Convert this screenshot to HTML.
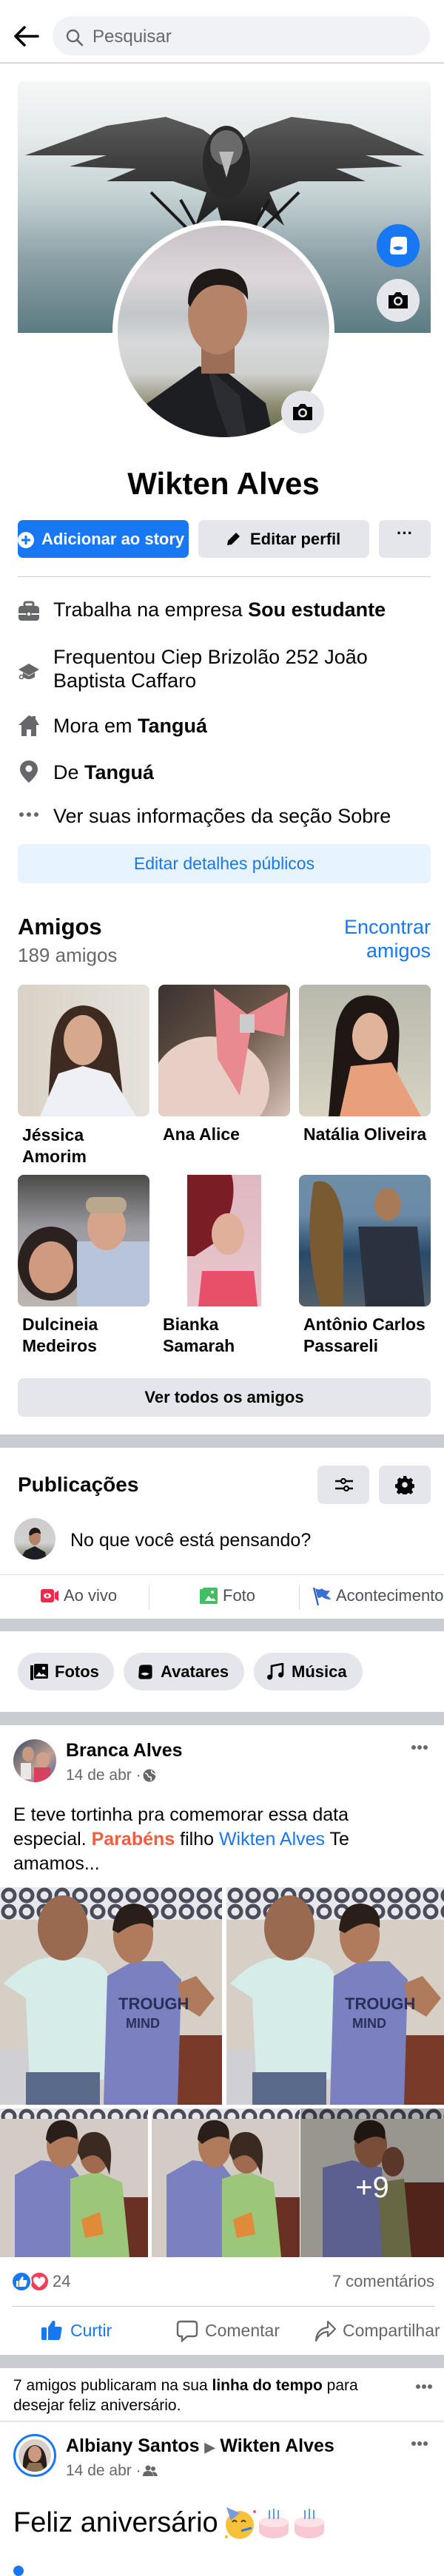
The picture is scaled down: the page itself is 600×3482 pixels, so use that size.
<!DOCTYPE html>
<html><head><meta charset="utf-8">
<style>
*{margin:0;padding:0;box-sizing:border-box}
body{width:600px;height:3472px;position:relative;background:#fff;font-family:"Liberation Sans",Arial,sans-serif;color:#050505;overflow:hidden}
.a{position:absolute}
.t{position:absolute;white-space:nowrap;line-height:1.15}
.b{font-weight:bold}
.sep{position:absolute;left:0;width:600px;background:#c9ccd1}
.gbtn{position:absolute;background:#e4e6eb;border-radius:8px}
.ph{position:absolute;overflow:hidden}
.grey{color:#65676b}
</style></head><body>

<!-- header -->
<svg class="a" style="left:18px;top:34px" width="36" height="30" viewBox="0 0 36 30"><path d="M33 15H4M15 3L3 15l12 12" stroke="#050505" stroke-width="3.6" fill="none" stroke-linecap="round" stroke-linejoin="round"/></svg>
<div class="a" style="left:71px;top:22px;width:510px;height:53px;border-radius:27px;background:#f0f2f5"></div>
<svg class="a" style="left:88px;top:38px" width="26" height="26" viewBox="0 0 26 26"><circle cx="10.5" cy="10.5" r="7.5" stroke="#65676b" stroke-width="2.4" fill="none"/><path d="M16 16l7 7" stroke="#65676b" stroke-width="2.6" stroke-linecap="round"/></svg>
<div class="t grey" style="left:125px;top:36px;font-size:24px">Pesquisar</div>
<div class="a" style="left:0;top:84px;width:600px;height:2px;background:#d6d8db"></div>

<!-- cover -->
<div class="a" style="left:24px;top:110px;width:558px;height:340px;border-radius:8px 8px 0 0;overflow:hidden;background:linear-gradient(#f5f6f6 0%,#e6eaeb 22%,#c5d2d4 45%,#8da2a7 70%,#5d7b83 100%)">
<svg width="558" height="340" viewBox="0 0 558 340">
<defs><linearGradient id="w" x1="0" y1="0" x2="0" y2="1"><stop offset="0" stop-color="#5a5a5a"/><stop offset="1" stop-color="#151515"/></linearGradient></defs>
<path d="M10 100 L120 60 L200 48 L250 65 L270 80 L282 65 L300 80 L320 65 L370 48 L450 58 L550 100 L470 100 L520 115 L430 118 L470 135 L380 135 L340 150 L360 195 L330 170 L318 215 L300 190 L282 215 L270 170 L240 195 L255 150 L210 135 L120 135 L160 118 L70 115 L120 100 Z" fill="url(#w)"/>
<ellipse cx="282" cy="110" rx="32" ry="50" fill="#2a2a2a"/>
<ellipse cx="282" cy="90" rx="22" ry="24" fill="#6a6a6a"/>
<path d="M272 95 L282 130 L292 95 Z" fill="#bbb"/>
<path d="M180 150 L240 210 M380 150 L320 210 M220 160 L260 230 M340 160 L300 230" stroke="#1a1a1a" stroke-width="4"/>
</svg></div>
<div class="a" style="left:509px;top:303px;width:58px;height:58px;border-radius:50%;background:#1877f2"></div>
<svg class="a" style="left:523px;top:317px" width="30" height="30" viewBox="0 0 30 30"><path d="M5 8 Q5 3 12 3 L24 3 Q27 3 27 8 L27 22 Q27 27 22 27 L8 27 Q4 27 4 22 Z" fill="#fff"/><path d="M8 18 Q15 14 22 18 Q15 24 8 18Z" fill="#1877f2"/></svg>
<div class="a" style="left:509px;top:377px;width:58px;height:58px;border-radius:50%;background:#e4e6eb"></div>
<svg class="a" style="left:522px;top:391px" width="32" height="30" viewBox="0 0 32 30"><path d="M3 8h7l3-4h6l3 4h7v18H3z" fill="#050505"/><circle cx="16" cy="16" r="6" fill="#e4e6eb"/><circle cx="16" cy="16" r="3.5" fill="#050505"/></svg>

<!-- profile pic -->
<div class="a" style="left:152px;top:298px;width:300px;height:300px;border-radius:50%;background:#fff"></div>
<div class="a" style="left:159px;top:305px;width:286px;height:286px;border-radius:50%;overflow:hidden;background:linear-gradient(#c9c2c8 0%,#ddd6da 25%,#c2c6c9 42%,#d6d8d9 55%,#cfd1d0 70%,#8d8c70 85%,#5a5f3e 100%)">
<svg width="286" height="286" viewBox="0 0 286 286">
<path d="M20 286 L40 240 L110 190 L150 200 L200 240 L210 286Z" fill="#1d1e22"/>
<path d="M120 190 L135 245 L150 286 L175 286 L165 230 Z" fill="#2b2d33"/>
<rect x="113" y="150" width="45" height="50" fill="#9b6e57"/>
<ellipse cx="135" cy="120" rx="40" ry="54" fill="#b58368"/>
<path d="M95 105 Q95 60 138 58 Q178 60 176 100 Q165 80 135 80 Q110 82 98 110Z" fill="#1f1a17"/>
</svg></div>
<div class="a" style="left:380px;top:528px;width:58px;height:58px;border-radius:50%;background:#e4e6eb"></div>
<svg class="a" style="left:393px;top:542px" width="32" height="30" viewBox="0 0 32 30"><path d="M3 8h7l3-4h6l3 4h7v18H3z" fill="#050505"/><circle cx="16" cy="16" r="6" fill="#e4e6eb"/><circle cx="16" cy="16" r="3.5" fill="#050505"/></svg>

<div class="t b" style="left:0;width:604px;text-align:center;top:630px;font-size:42px">Wikten Alves</div>

<!-- buttons -->
<div class="a" style="left:24px;top:703px;width:231px;height:51px;border-radius:7px;background:#1877f2"></div>
<svg class="a" style="left:24px;top:719px" width="22" height="22" viewBox="0 0 22 22"><circle cx="11" cy="11" r="11" fill="#fff"/><path d="M11 5v12M5 11h12" stroke="#1877f2" stroke-width="3"/></svg>
<div class="t b" style="left:56px;top:716px;font-size:22px;color:#fff">Adicionar ao story</div>
<div class="gbtn" style="left:268px;top:703px;width:231px;height:51px;border-radius:7px"></div>
<svg class="a" style="left:305px;top:717px" width="22" height="22" viewBox="0 0 22 22"><path d="M2 20l1-6L14 3l5 5L8 19z" fill="#050505"/></svg>
<div class="t b" style="left:338px;top:716px;font-size:22px">Editar perfil</div>
<div class="gbtn" style="left:512px;top:703px;width:70px;height:51px;border-radius:7px"></div>
<div class="t b" style="left:512px;width:70px;text-align:center;top:708px;font-size:22px">···</div>

<div class="a" style="left:24px;top:779px;width:558px;height:1px;background:#ced0d4"></div>

<!-- info -->
<svg class="a" style="left:24px;top:812px" width="30" height="30" viewBox="0 0 30 30"><rect x="9" y="2" width="12" height="6" rx="2" fill="none" stroke="#65676b" stroke-width="3"/><rect x="1" y="7" width="28" height="20" rx="4" fill="#65676b"/><rect x="1" y="17" width="28" height="2" fill="#fff"/><circle cx="15" cy="18" r="3" fill="#fff" stroke="#65676b" stroke-width="1.5"/></svg>
<div class="t" style="left:72px;top:809px;font-size:27px">Trabalha na empresa <b>Sou estudante</b></div>
<svg class="a" style="left:24px;top:893px" width="30" height="28" viewBox="0 0 30 28"><path d="M1 12L15 4l14 8-14 8z" fill="#65676b"/><path d="M7 16v6q8 6 16 0v-6l-8 5z" fill="#65676b"/><circle cx="5" cy="22" r="2.5" fill="none" stroke="#65676b" stroke-width="1.6"/></svg>
<div class="t" style="left:72px;top:872px;font-size:27px;line-height:32px">Frequentou Ciep Brizolão 252 João<br>Baptista Caffaro</div>
<svg class="a" style="left:24px;top:966px" width="30" height="30" viewBox="0 0 30 30"><path d="M15 1L1 14h4v15h7v-9h6v9h7V14h4L24 6V2h-4v1z" fill="#65676b"/></svg>
<div class="t" style="left:72px;top:966px;font-size:27px">Mora em <b>Tanguá</b></div>
<svg class="a" style="left:26px;top:1027px" width="26" height="32" viewBox="0 0 26 32"><path d="M13 1C6 1 1 6 1 13c0 8 12 18 12 18s12-10 12-18C25 6 20 1 13 1z" fill="#65676b"/><circle cx="13" cy="12" r="4.5" fill="#fff"/></svg>
<div class="t" style="left:72px;top:1029px;font-size:27px">De <b>Tanguá</b></div>
<svg class="a" style="left:25px;top:1097px" width="28" height="8"><circle cx="4" cy="4" r="3" fill="#65676b"/><circle cx="14" cy="4" r="3" fill="#65676b"/><circle cx="24" cy="4" r="3" fill="#65676b"/></svg>
<div class="t" style="left:72px;top:1088px;font-size:27px">Ver suas informações da seção Sobre</div>
<div class="a" style="left:24px;top:1141px;width:558px;height:53px;border-radius:8px;background:#e7f3ff"></div>
<div class="t" style="left:24px;width:558px;text-align:center;top:1154px;font-size:23px;color:#1877f2">Editar detalhes públicos</div>

<!-- friends -->
<div class="t b" style="left:24px;top:1235px;font-size:31px">Amigos</div>
<div class="t grey" style="left:24px;top:1277px;font-size:26px">189 amigos</div>
<div class="t" style="right:18px;top:1237px;font-size:27px;line-height:32px;text-align:right;color:#1877f2">Encontrar<br>amigos</div>

<div class="ph" style="left:24px;top:1331px;width:178px;height:178px;border-radius:8px;background:linear-gradient(90deg,#d9d2c6,#e6e2dc)"><svg width="178" height="178"><path d="M40 178 L45 90 Q50 30 88 28 Q130 30 135 90 L145 178Z" fill="#3d2a20"/><ellipse cx="88" cy="75" rx="26" ry="34" fill="#d6a98f"/><path d="M30 178 L55 120 L88 110 L125 120 L160 178Z" fill="#eef0f6"/></svg></div>
<div class="ph" style="left:214px;top:1331px;width:178px;height:178px;border-radius:8px;background:linear-gradient(135deg,#3a3330,#6a5548 50%,#d9c2b8)"><svg width="178" height="178"><ellipse cx="70" cy="140" rx="80" ry="70" fill="#e8cfc6"/><path d="M75 5 L120 40 L175 10 L170 70 L125 60 L110 150 L80 100Z" fill="#e98a8e"/><rect x="110" y="40" width="20" height="25" fill="#ccc"/></svg></div>
<div class="ph" style="left:404px;top:1331px;width:178px;height:178px;border-radius:8px;background:linear-gradient(#b8b8ac,#d8d4c4)"><svg width="178" height="178"><path d="M40 178 L50 60 Q60 10 100 15 Q140 20 135 80 L130 178Z" fill="#1e1714"/><ellipse cx="96" cy="70" rx="24" ry="32" fill="#e0b49b"/><path d="M55 178 L70 110 L125 105 L165 178Z" fill="#e8a07c"/></svg></div>

<div class="t b" style="left:30px;top:1520px;font-size:23px;line-height:29px">Jéssica<br>Amorim</div>
<div class="t b" style="left:220px;top:1520px;font-size:23px">Ana Alice</div>
<div class="t b" style="left:410px;top:1520px;font-size:23px">Natália Oliveira</div>

<div class="ph" style="left:24px;top:1588px;width:178px;height:178px;border-radius:8px;background:linear-gradient(#4a4a48,#9a9aa0 40%,#c0b6b0)"><svg width="178" height="178"><ellipse cx="45" cy="120" rx="45" ry="50" fill="#2b2220"/><ellipse cx="45" cy="125" rx="30" ry="35" fill="#d09a80"/><rect x="80" y="90" width="98" height="88" fill="#b8c4da"/><ellipse cx="120" cy="70" rx="26" ry="32" fill="#d6a48a"/><rect x="92" y="30" width="55" height="22" rx="10" fill="#b7a88e"/></svg></div>
<div class="ph" style="left:253px;top:1588px;width:100px;height:178px;background:linear-gradient(#e0b8c2,#e8c6cc)"><svg width="100" height="178"><path d="M0 0 L60 0 Q70 40 40 90 L10 110 L0 110Z" fill="#7a1d25"/><ellipse cx="55" cy="80" rx="22" ry="28" fill="#e0b09a"/><path d="M20 130 L90 130 L95 178 L15 178Z" fill="#e8506a"/></svg></div>
<div class="ph" style="left:404px;top:1588px;width:178px;height:178px;border-radius:8px;background:linear-gradient(#6e8ea6,#6a8aa8 30%,#2a4a6a 60%,#54606a)"><svg width="178" height="178"><path d="M20 10 Q50 0 60 60 L60 178 L30 178 Q5 100 20 10Z" fill="#7a5a30"/><ellipse cx="120" cy="40" rx="18" ry="22" fill="#a77a58"/><path d="M80 70 L160 70 L170 178 L90 178Z" fill="#2a3240"/></svg></div>

<div class="t b" style="left:30px;top:1776px;font-size:23px;line-height:29px">Dulcineia<br>Medeiros</div>
<div class="t b" style="left:220px;top:1776px;font-size:23px;line-height:29px">Bianka<br>Samarah</div>
<div class="t b" style="left:410px;top:1776px;font-size:23px;line-height:29px">Antônio Carlos<br>Passareli</div>

<div class="gbtn" style="left:24px;top:1863px;width:558px;height:52px"></div>
<div class="t b" style="left:24px;width:558px;text-align:center;top:1876px;font-size:22px">Ver todos os amigos</div>

<div class="sep" style="top:1939px;height:18px"></div>

<!-- publicações -->
<div class="t b" style="left:24px;top:1991px;font-size:28px">Publicações</div>
<div class="gbtn" style="left:429px;top:1981px;width:70px;height:52px"></div>
<svg class="a" style="left:452px;top:1997px" width="26" height="20" viewBox="0 0 26 20"><path d="M1 5h8M15 5h10M1 15h12M19 15h6" stroke="#050505" stroke-width="2.4"/><circle cx="12" cy="5" r="3" fill="none" stroke="#050505" stroke-width="2.2"/><circle cx="16" cy="15" r="3" fill="none" stroke="#050505" stroke-width="2.2"/></svg>
<div class="gbtn" style="left:512px;top:1981px;width:70px;height:52px"></div>
<svg class="a" style="left:534px;top:1994px" width="26" height="26" viewBox="0 0 24 24"><path d="M10 1h4l.6 3 2.3 1 2.6-1.7 2.8 2.8-1.7 2.6 1 2.3 3 .6v4l-3 .6-1 2.3 1.7 2.6-2.8 2.8-2.6-1.7-2.3 1-.6 3h-4l-.6-3-2.3-1-2.6 1.7-2.8-2.8 1.7-2.6-1-2.3-3-.6v-4l3-.6 1-2.3L2.7 5.7l2.8-2.8L8.1 4.6l2.3-1z" fill="#050505"/><circle cx="12" cy="12" r="3.5" fill="#e4e6eb"/></svg>

<div class="a" style="left:19px;top:2052px;width:56px;height:56px;border-radius:50%;overflow:hidden;background:linear-gradient(#d0cccf,#cfd1d0 60%,#7a7a60)"><svg width="56" height="56"><path d="M8 56 L15 44 L28 38 L42 46 L44 56Z" fill="#1d1e22"/><ellipse cx="28" cy="26" rx="8" ry="11" fill="#b58368"/><path d="M20 22 Q21 13 29 13 Q36 14 36 22 Q31 17 22 24Z" fill="#1f1a17"/></svg></div>
<div class="t" style="left:95px;top:2068px;font-size:25px">No que você está pensando?</div>
<div class="a" style="left:0;top:2128px;width:600px;height:1px;background:#dadde1"></div>
<svg class="a" style="left:55px;top:2147px" width="24" height="20" viewBox="0 0 24 20"><rect x="0" y="1" width="18" height="18" rx="3" fill="#f02849"/><path d="M19 6l5-3v14l-5-3z" fill="#f02849"/><ellipse cx="9" cy="10" rx="5" ry="3.5" fill="#fff"/><circle cx="9" cy="10" r="1.8" fill="#f02849"/></svg>
<div class="t" style="left:86px;top:2144px;font-size:22px;color:#4b4f56">Ao vivo</div>
<div class="a" style="left:201px;top:2142px;width:1px;height:34px;background:#dadde1"></div>
<svg class="a" style="left:270px;top:2145px" width="24" height="24" viewBox="0 0 24 24"><rect x="0" y="3" width="5" height="20" rx="1" fill="#45bd62"/><rect x="4" y="1" width="20" height="22" rx="2" fill="#45bd62"/><path d="M7 19l5-7 4 5 2-2 4 4z" fill="#fff"/><circle cx="17" cy="7" r="2" fill="#fff"/></svg>
<div class="t" style="left:301px;top:2144px;font-size:22px;color:#4b4f56">Foto</div>
<div class="a" style="left:404px;top:2142px;width:1px;height:34px;background:#dadde1"></div>
<svg class="a" style="left:423px;top:2145px" width="24" height="26" viewBox="0 0 24 26"><path d="M1 1l6 24" stroke="#2d5ca8" stroke-width="2.2"/><path d="M3 2q6 3 9 0 3 4 11 3l-5 7q4 1 6 5-8 0-12-4-3 3-6 1z" fill="#3b6fd1"/></svg>
<div class="t" style="left:454px;top:2144px;font-size:22px;color:#4b4f56">Acontecimento</div>

<div class="sep" style="top:2188px;height:17px"></div>

<!-- pills -->
<div class="a" style="left:24px;top:2234px;width:130px;height:51px;border-radius:26px;background:#e4e6eb"></div>
<svg class="a" style="left:41px;top:2249px" width="24" height="22" viewBox="0 0 24 22"><rect x="0" y="2" width="4" height="20" fill="#050505"/><rect x="5" y="0" width="19" height="20" rx="2" fill="#050505"/><path d="M7 17l5-6 3 4 2-2 5 4z" fill="#fff"/><circle cx="18" cy="6" r="2" fill="#fff"/></svg>
<div class="t b" style="left:74px;top:2247px;font-size:22px">Fotos</div>
<div class="a" style="left:167px;top:2234px;width:163px;height:51px;border-radius:26px;background:#e4e6eb"></div>
<svg class="a" style="left:184px;top:2248px" width="24" height="24" viewBox="0 0 30 30"><path d="M5 8 Q5 3 12 3 L24 3 Q27 3 27 8 L27 22 Q27 27 22 27 L8 27 Q4 27 4 22 Z" fill="#050505"/><path d="M8 18 Q15 14 22 18 Q15 24 8 18Z" fill="#e4e6eb"/></svg>
<div class="t b" style="left:217px;top:2247px;font-size:22px">Avatares</div>
<div class="a" style="left:343px;top:2234px;width:147px;height:51px;border-radius:26px;background:#e4e6eb"></div>
<svg class="a" style="left:360px;top:2248px" width="24" height="24" viewBox="0 0 24 24"><path d="M7 19V4l15-3v15" stroke="#050505" stroke-width="2.6" fill="none"/><circle cx="4.5" cy="19" r="3.5" fill="#050505"/><circle cx="19.5" cy="16" r="3.5" fill="#050505"/></svg>
<div class="t b" style="left:394px;top:2247px;font-size:22px">Música</div>

<div class="sep" style="top:2314px;height:18px"></div>

<!-- post 1 -->
<div class="a" style="left:18px;top:2351px;width:58px;height:58px;border-radius:50%;overflow:hidden;background:linear-gradient(135deg,#3a4a6a,#c0a090 60%,#4a5aa0)"><svg width="58" height="58"><ellipse cx="20" cy="20" rx="8" ry="10" fill="#c69a80"/><ellipse cx="40" cy="28" rx="9" ry="11" fill="#d0a088"/><rect x="10" y="32" width="14" height="22" fill="#e8e8e8"/><rect x="28" y="38" width="22" height="20" fill="#d84060"/></svg></div>
<div class="t b" style="left:89px;top:2352px;font-size:25px">Branca Alves</div>
<div class="t grey" style="left:89px;top:2388px;font-size:21px">14 de abr · </div>
<svg class="a" style="left:193px;top:2391px" width="18" height="18" viewBox="0 0 18 18"><circle cx="9" cy="9" r="8.5" fill="#65676b"/><path d="M3 6q3 0 4 3t3 2 1 5M12 2q-1 3 2 4t3 3" stroke="#fff" stroke-width="1.6" fill="none"/></svg>
<svg class="a" style="left:555px;top:2358px" width="24" height="8"><circle cx="4" cy="4" r="3" fill="#65676b"/><circle cx="12" cy="4" r="3" fill="#65676b"/><circle cx="20" cy="4" r="3" fill="#65676b"/></svg>
<div class="t" style="left:18px;top:2437px;font-size:25px;line-height:33px">E teve tortinha pra comemorar essa data<br>especial. <span class="b" style="color:#f35c3f">Parabéns</span> filho <span style="color:#1877f2">Wikten Alves</span> Te<br>amamos...</div>

<!-- photos -->
<svg class="a" style="left:0;top:2551px" width="600" height="500" viewBox="0 0 600 500">
<defs>
<pattern id="pt" width="24" height="22" patternUnits="userSpaceOnUse"><rect width="24" height="22" fill="#e8e8ec"/><circle cx="12" cy="11" r="8" fill="none" stroke="#4a4c5a" stroke-width="5"/></pattern>
<g id="p1">
<rect width="300" height="294" fill="#d6cfc6"/><rect width="300" height="44" fill="url(#pt)"/>
<rect x="230" y="200" width="70" height="94" fill="#7a3a2a"/><rect x="0" y="220" width="40" height="74" fill="#cfcfd4"/>
<path d="M5 130 Q40 95 70 95 L110 95 Q150 100 150 140 L140 260 L40 260 L35 150 Z" fill="#d6ece9"/>
<rect x="35" y="250" width="100" height="44" fill="#5a6a8a"/>
<ellipse cx="85" cy="55" rx="34" ry="44" fill="#9a6a50"/>
<path d="M145 120 L180 100 L220 100 L245 125 L240 294 L140 294 Z" fill="#7a80c0"/>
<ellipse cx="180" cy="65" rx="27" ry="38" fill="#b07a5c"/><path d="M152 58 Q155 22 182 22 Q210 25 207 55 Q190 40 160 62Z" fill="#2a1e18"/>
<path d="M240 130 L265 120 L290 150 L270 175 L245 160Z" fill="#b07a5c"/>
<text x="160" y="165" font-family="Liberation Sans" font-weight="bold" font-size="22" fill="#2a2f5a">TROUGH</text>
<text x="170" y="190" font-family="Liberation Sans" font-weight="bold" font-size="18" fill="#2a2f5a">MIND</text>
</g>
<g id="p2">
<rect width="200" height="201" fill="#d2ccc4"/><rect width="200" height="14" fill="url(#pt)"/>
<rect x="150" y="120" width="50" height="81" fill="#6a3024"/>
<path d="M20 90 L55 70 L95 75 L110 95 L100 201 L20 201Z" fill="#7a80c0"/>
<ellipse cx="85" cy="50" rx="22" ry="30" fill="#b07a5c"/><path d="M62 42 Q64 14 88 16 Q108 20 104 42 Q90 32 68 48Z" fill="#2a1e18"/>
<path d="M95 95 L130 85 L165 100 L175 201 L95 201Z" fill="#9cc67a"/>
<ellipse cx="128" cy="62" rx="20" ry="26" fill="#a06a4e"/><path d="M105 60 Q106 30 130 32 Q152 36 150 70 L148 90 Q135 50 110 70Z" fill="#3a2a22"/>
<path d="M110 150 L135 140 L140 170 L115 175Z" fill="#e08a3a"/>
</g>
</defs>
<use href="#p1" x="0" y="0"/><use href="#p1" x="306" y="0"/>
<use href="#p2" x="0" y="299"/><use href="#p2" x="205" y="299" transform=""/>
<g transform="translate(406 299)">
<rect width="194" height="201" fill="#cdc7bf"/><rect width="194" height="14" fill="url(#pt)"/>
<rect x="130" y="100" width="64" height="101" fill="#6a3024"/>
<path d="M30 80 L70 70 L110 80 L115 201 L30 201Z" fill="#7a80c0"/>
<ellipse cx="95" cy="50" rx="22" ry="30" fill="#a0684c"/><path d="M72 42 Q74 14 98 16 Q118 20 114 42 Q100 32 78 48Z" fill="#2a1e18"/>
<path d="M105 100 L140 95 L150 201 L110 201Z" fill="#8a8a5a"/>
<ellipse cx="125" cy="72" rx="15" ry="20" fill="#7a4a38"/>
<rect width="194" height="201" fill="#000" opacity="0.25"/>
<text x="97" y="120" font-family="Liberation Sans" font-size="40" fill="#fff" text-anchor="middle">+9</text>
</g>
</svg>

<!-- reactions -->
<div class="a" style="left:41px;top:3072px;width:24px;height:24px;border-radius:50%;background:#f33e58;border:2px solid #fff;box-sizing:content-box;margin:-2px"></div>
<svg class="a" style="left:43px;top:3076px" width="20" height="18" viewBox="0 0 20 18"><path d="M10 16C4 11 2 9 2 6a4 4 0 0 1 8-1 4 4 0 0 1 8 1c0 3-2 5-8 10z" fill="#fff"/></svg>
<div class="a" style="left:17px;top:3072px;width:24px;height:24px;border-radius:50%;background:#1877f2;border:2px solid #fff;box-sizing:content-box;margin:-2px"></div>
<svg class="a" style="left:20px;top:3075px" width="18" height="18" viewBox="0 0 18 18"><rect x="2" y="8" width="3" height="8" fill="#fff"/><path d="M6 8l4-6q2 0 1.5 3L11 7h4q2 0 1.5 2l-1.5 6q-.5 1-2 1H6z" fill="#fff"/></svg>
<div class="t grey" style="left:71px;top:3071px;font-size:22px">24</div>
<div class="t grey" style="right:13px;top:3071px;font-size:22px">7 comentários</div>
<div class="a" style="left:17px;top:3117px;width:571px;height:1px;background:#ced0d4"></div>
<svg class="a" style="left:55px;top:3134px" width="30" height="30" viewBox="0 0 30 30"><rect x="1" y="12" width="7" height="17" rx="1.5" fill="#1877f2"/><path d="M10 12l6-9q4-1 3.5 4L19 11h7q3 0 2.5 3l-2 12q-.5 3-3.5 3H10z" fill="#1877f2"/></svg>
<div class="t" style="left:95px;top:3137px;font-size:23px;color:#1877f2">Curtir</div>
<svg class="a" style="left:238px;top:3136px" width="30" height="30" viewBox="0 0 30 30"><path d="M6 2h18q4 0 4 4v12q0 4-4 4H15l-7 6v-6H6q-4 0-4-4V6q0-4 4-4z" fill="none" stroke="#65676b" stroke-width="2.4"/></svg>
<div class="t grey" style="left:277px;top:3137px;font-size:23px">Comentar</div>
<svg class="a" style="left:425px;top:3136px" width="30" height="30" viewBox="0 0 30 30"><path d="M18 2l10 10-10 10v-6Q8 16 2 28q1-16 16-18z" fill="none" stroke="#65676b" stroke-width="2.2" stroke-linejoin="round"/></svg>
<div class="t grey" style="left:463px;top:3137px;font-size:23px">Compartilhar</div>

<div class="sep" style="top:3183px;height:18px"></div>

<div class="t" style="left:18px;top:3211px;font-size:21px;line-height:27px">7 amigos publicaram na sua <b>linha do tempo</b> para<br>desejar feliz aniversário.</div>
<svg class="a" style="left:561px;top:3222px" width="24" height="8"><circle cx="4" cy="4" r="3" fill="#65676b"/><circle cx="12" cy="4" r="3" fill="#65676b"/><circle cx="20" cy="4" r="3" fill="#65676b"/></svg>
<div class="a" style="left:0;top:3272px;width:600px;height:2px;background:#e4e6eb"></div>

<div class="a" style="left:18px;top:3290px;width:58px;height:58px;border-radius:50%;border:3px solid #1877f2;background:#fff"></div>
<div class="a" style="left:25px;top:3297px;width:44px;height:44px;border-radius:50%;overflow:hidden;background:#d8d0c8"><svg width="44" height="44"><path d="M6 44 Q4 10 22 8 Q40 10 38 44Z" fill="#2a1e18"/><ellipse cx="22" cy="20" rx="9" ry="11" fill="#c99a80"/><path d="M8 44 L14 32 L30 32 L36 44Z" fill="#8a7050"/></svg></div>
<div class="t b" style="left:89px;top:3292px;font-size:25px">Albiany Santos <span style="color:#65676b;font-size:18px">▶</span> Wikten Alves</div>
<div class="t grey" style="left:89px;top:3328px;font-size:21px">14 de abr · </div>
<svg class="a" style="left:193px;top:3332px" width="20" height="16" viewBox="0 0 20 16"><circle cx="7" cy="4" r="3.5" fill="#65676b"/><path d="M0 15q0-7 7-7t7 7z" fill="#65676b"/><circle cx="14" cy="5" r="3" fill="#65676b"/><path d="M13 9q6 0 7 6h-5z" fill="#65676b"/></svg>
<svg class="a" style="left:555px;top:3299px" width="24" height="8"><circle cx="4" cy="4" r="3" fill="#65676b"/><circle cx="12" cy="4" r="3" fill="#65676b"/><circle cx="20" cy="4" r="3" fill="#65676b"/></svg>

<div class="t" style="left:18px;top:3389px;font-size:38px">Feliz aniversário</div>
<svg class="a" style="left:300px;top:3385px" width="145" height="50" viewBox="0 0 145 50">
<circle cx="24" cy="28" r="19" fill="#f7c23a"/><path d="M6 4l18 8-12 10z" fill="#7a9ae0"/><path d="M14 24q3-4 6 0M26 24q3-4 6 0" stroke="#5a3a1a" stroke-width="2" fill="none"/><path d="M26 36l14-4" stroke="#3a7ae0" stroke-width="3"/><circle cx="44" cy="10" r="2" fill="#e05a8a"/><circle cx="6" cy="44" r="2" fill="#f0c030"/>
<ellipse cx="70" cy="36" rx="20" ry="10" fill="#f7c9d2"/><rect x="50" y="24" width="40" height="12" fill="#f7c9d2"/><ellipse cx="70" cy="24" rx="20" ry="7" fill="#fde3e8"/><path d="M64 8v12M70 6v14M76 8v12" stroke="#5aa0e0" stroke-width="2"/>
<ellipse cx="118" cy="36" rx="20" ry="10" fill="#f7c9d2"/><rect x="98" y="24" width="40" height="12" fill="#f7c9d2"/><ellipse cx="118" cy="24" rx="20" ry="7" fill="#fde3e8"/><path d="M112 8v12M118 6v14M124 8v12" stroke="#5aa0e0" stroke-width="2"/>
</svg>
<div class="a" style="left:18px;top:3468px;width:14px;height:14px;border-radius:50%;background:#1877f2"></div>
</body></html>
